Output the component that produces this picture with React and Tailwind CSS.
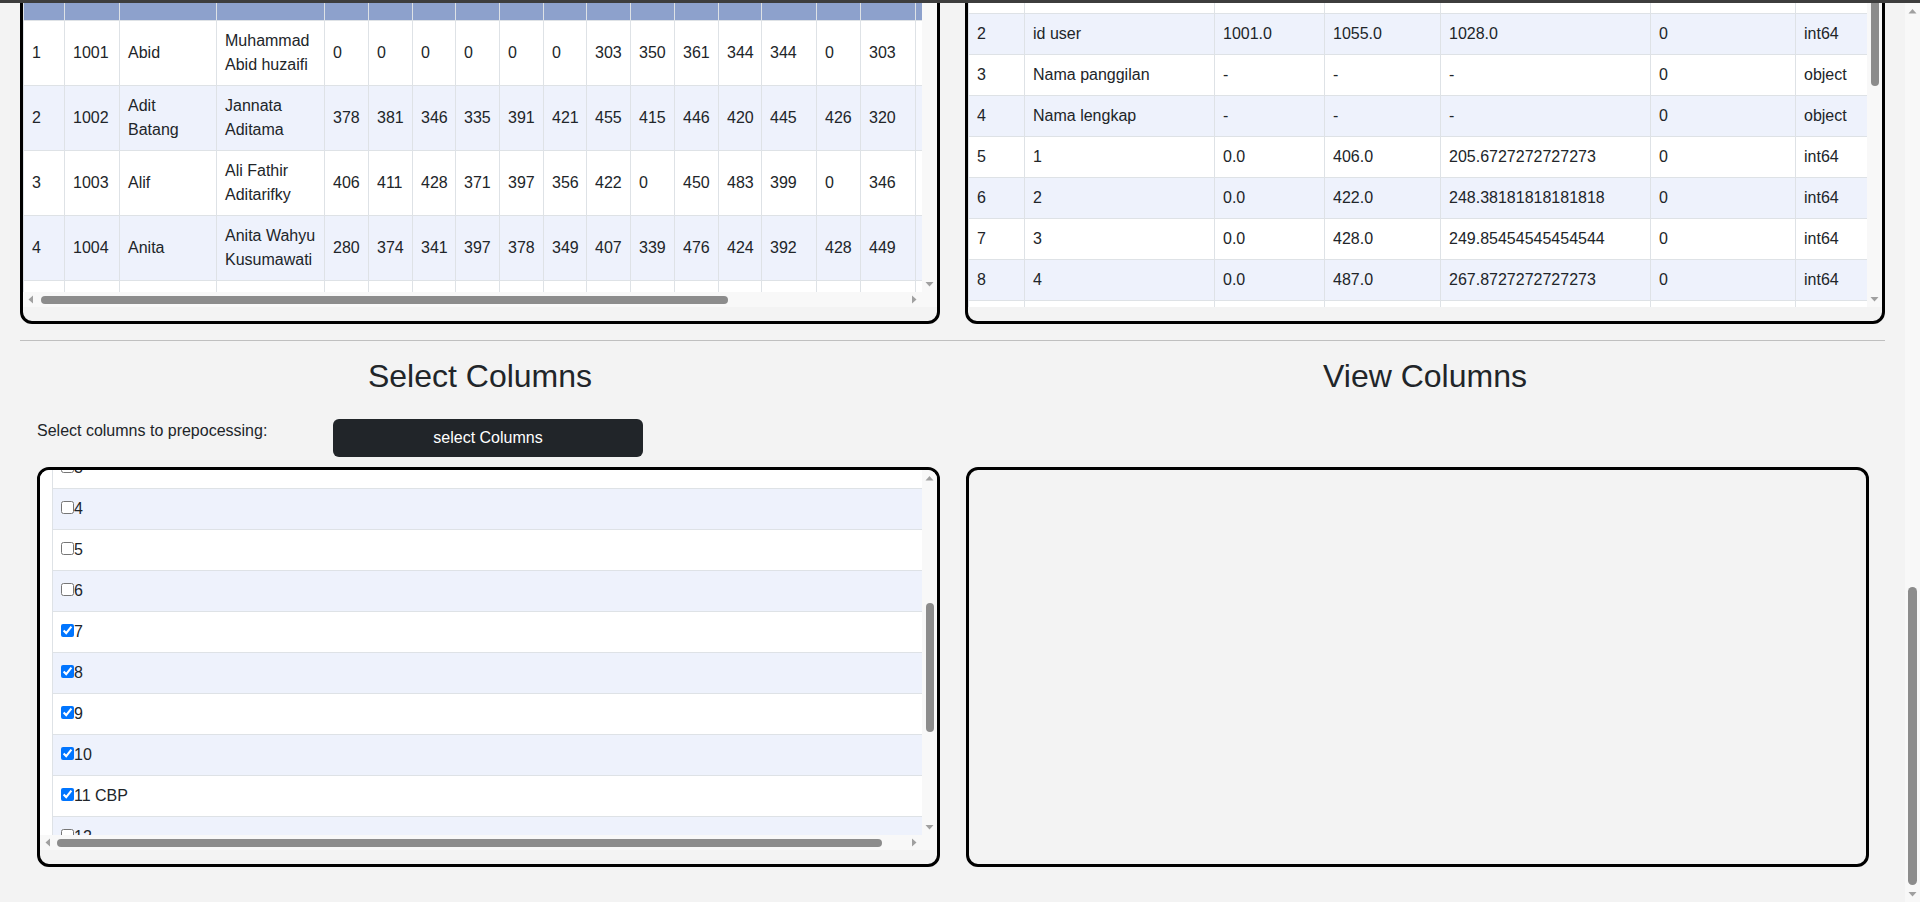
import React, { useLayoutEffect, useRef } from 'react';

const COLUMNS = ['No', 'id user', 'Nama panggilan', 'Nama lengkap', '1', '2', '3', '4', '5', '6', '7', '8', '9', '10', '11 CBP', '12', '13 CBP', '14', '15', '16', '17', '18'];
const DATA_WIDTHS = ['w-[41px]', 'w-[55px]', 'w-[97px]', 'w-[108px]', 'w-[44px]', 'w-[44px]', 'w-[43px]', 'w-[44px]', 'w-[44px]', 'w-[43px]', 'w-[44px]', 'w-[44px]', 'w-[44px]', 'w-[43px]', 'w-[55px]', 'w-[44px]', 'w-[55px]', 'w-[44px]', 'w-[44px]', 'w-[44px]', 'w-[55px]', 'w-[59px]'];
const STAT_WIDTHS = ['w-[56px]', 'w-[190px]', 'w-[110px]', 'w-[116px]', 'w-[210px]', 'w-[145px]', 'w-[72px]'];
const CHECKED = ['7', '8', '9', '10', '11 CBP'];

const FIRST_ROWS = [
    ['1', '1001', 'Abid', 'Muhammad Abid huzaifi', 0, 0, 0, 0, 0, 0, 303, 350, 361, 344, 344, 0, 303],
    ['2', '1002', 'Adit Batang', 'Jannata Aditama', 378, 381, 346, 335, 391, 421, 455, 415, 446, 420, 445, 426, 320],
    ['3', '1003', 'Alif', 'Ali Fathir Aditarifky', 406, 411, 428, 371, 397, 356, 422, 0, 450, 483, 399, 0, 346],
    ['4', '1004', 'Anita', 'Anita Wahyu Kusumawati', 280, 374, 341, 397, 378, 349, 407, 339, 476, 424, 392, 428, 449],
];
const NICKS = ['Aqila', 'Arga', 'Aurel', 'Bagas', 'Bima', 'Cinta', 'Daffa', 'Dewi', 'Dimas', 'Fajar', 'Farah', 'Gilang', 'Hana', 'Ilham', 'Intan', 'Kevin', 'Laras'];
const LAST = ['Pratama', 'Saputra', 'Lestari', 'Ramadhani', 'Putri', 'Nugroho'];

const score = (i, j) => ((i + j) % 11 === 0 ? 0 : ((i * 37 + j * 53) % 190) + 290);

const students = [
    ...FIRST_ROWS.map((r) => [...r, 402, 377, 415, 388, 430]),
    ...Array.from({ length: 51 }, (_, k) => {
        const i = k + 5;
        const nick = NICKS[k % NICKS.length];
        return [String(i), String(1000 + i), nick, `${nick} ${LAST[k % LAST.length]}`, ...Array.from({ length: 18 }, (_, j) => score(i, j))];
    }),
];

const stats = [
    ['1', 'No', '1.0', '55.0', '28.0', '0', 'int64'],
    ['2', 'id user', '1001.0', '1055.0', '1028.0', '0', 'int64'],
    ['3', 'Nama panggilan', '-', '-', '-', '0', 'object'],
    ['4', 'Nama lengkap', '-', '-', '-', '0', 'object'],
    ['5', '1', '0.0', '406.0', '205.6727272727273', '0', 'int64'],
    ['6', '2', '0.0', '422.0', '248.38181818181818', '0', 'int64'],
    ['7', '3', '0.0', '428.0', '249.85454545454544', '0', 'int64'],
    ['8', '4', '0.0', '487.0', '267.8727272727273', '0', 'int64'],
    ...COLUMNS.slice(8).map((c, k) => [String(k + 9), c, '0.0', `${441 + ((k * 13) % 50)}.0`, `${262 + ((k * 7) % 40)}.4181818181818`, '0', 'int64']),
];

const cell = 'border border-[#dee2e6] px-2 py-2 align-middle';

const ARROWS = {
    up: '3.5,10.5 11.5,10.5 7.5,6',
    down: '3.5,5 11.5,5 7.5,9.5',
    left: '10,3.5 10,11.5 5.5,7.5',
    right: '5,3.5 5,11.5 9.5,7.5',
};

const Arrow = ({ dir }) => (
    <svg width="15" height="15" viewBox="0 0 15 15" className="shrink-0 block">
        <polygon points={ARROWS[dir]} fill="#a0a0a0" />
    </svg>
);

const VBar = ({ thumb }) => (
    <div className="w-[15px] shrink-0 flex flex-col bg-[#f8f8f8]">
        <Arrow dir="up" />
        <div className="flex-1 overflow-hidden">
            <div className={`mx-auto w-[8px] rounded-full bg-[#8c8c8c] ${thumb}`} />
        </div>
        <Arrow dir="down" />
    </div>
);

const HBar = ({ thumb }) => (
    <div className="h-[15px] flex-1 flex bg-[#f8f8f8]">
        <Arrow dir="left" />
        <div className="flex-1 flex items-center overflow-hidden">
            <div className={`h-[8px] rounded-full bg-[#8c8c8c] ${thumb}`} />
        </div>
        <Arrow dir="right" />
    </div>
);

const App = () => {
    const pageRef = useRef(null);
    const topRef = useRef(null);
    const listRef = useRef(null);

    useLayoutEffect(() => {
        const page = pageRef.current;
        const offset = topRef.current.getBoundingClientRect().top - page.getBoundingClientRect().top;
        page.scrollTop = page.scrollTop + offset + 75;
        listRef.current.scrollTop = 334;
    }, []);

    return (
        <div className="h-screen flex flex-col font-['Liberation_Sans',Arial,sans-serif] text-[16px] leading-6 text-[#212529]">
            <div className="h-[3px] shrink-0 bg-[#3d3d3d]" />
            <div className="h-[899px] flex">
                <div ref={pageRef} className="flex-1 overflow-hidden bg-[#f3f3f3]">
                    <div className="px-[20px] pb-[44px]">
                        {/* Upload */}
                        <div className="h-[1657px] pt-6">
                            <h1 className="text-[40px] leading-[1.2] text-center">Preprocessing Data</h1>
                            <div className="mt-8 flex items-center gap-4">
                                <span>Upload dataset (.csv / .xlsx):</span>
                                <button className="px-4 h-[38px] bg-[#212529] text-white rounded-[6px]">Upload</button>
                            </div>
                        </div>

                        {/* Dataset + describe */}
                        <div ref={topRef} className="grid grid-cols-2 gap-x-[25px]">
                            <div className="border-[3px] border-black rounded-[12px] overflow-hidden pb-[14px]">
                                <div className="h-[361px] flex">
                                    <div className="flex-1 overflow-hidden">
                                        <table className="table-fixed border-collapse w-[1138px] text-left">
                                            <colgroup>
                                                {DATA_WIDTHS.map((w, i) => <col key={i} className={w} />)}
                                            </colgroup>
                                            <thead>
                                                <tr className="h-[89px] bg-[#8da1cc]">
                                                    {COLUMNS.map((c) => <th key={c} className={`${cell} font-bold`}>{c}</th>)}
                                                </tr>
                                            </thead>
                                            <tbody>
                                                {students.map((row) => (
                                                    <tr key={row[0]} className="even:bg-[#eef2fc] bg-white">
                                                        {row.map((v, j) => <td key={j} className={cell}>{v}</td>)}
                                                    </tr>
                                                ))}
                                            </tbody>
                                        </table>
                                    </div>
                                    <VBar thumb="h-[34px]" />
                                </div>
                                <div className="flex">
                                    <HBar thumb="ml-[3px] w-[687px]" />
                                    <div className="w-[15px] h-[15px] bg-[#f8f8f8]" />
                                </div>
                            </div>
                            <div className="border-[3px] border-black rounded-[12px] overflow-hidden pb-[14px]">
                                <div className="h-[376px] flex">
                                    <div className="flex-1 overflow-hidden">
                                        <table className="table-fixed border-collapse w-full text-left">
                                            <colgroup>
                                                {STAT_WIDTHS.map((w, i) => <col key={i} className={w} />)}
                                            </colgroup>
                                            <thead>
                                                <tr className="bg-[#8da1cc]">
                                                    {['#', 'Column', 'Min', 'Max', 'Mean', 'Missing', 'Dtype'].map((h) => (
                                                        <th key={h} className={`${cell} font-bold`}>{h}</th>
                                                    ))}
                                                </tr>
                                            </thead>
                                            <tbody>
                                                {stats.map((row) => (
                                                    <tr key={row[0]} className="even:bg-[#eef2fc] bg-white">
                                                        {row.map((v, j) => <td key={j} className={cell}>{v}</td>)}
                                                    </tr>
                                                ))}
                                            </tbody>
                                        </table>
                                    </div>
                                    <VBar thumb="h-[140px]" />
                                </div>
                            </div>
                        </div>

                        <hr className="mt-4 mb-4 border-t border-[#bfbfbf]" />

                        {/* Select / view columns */}
                        <div className="grid grid-cols-2 gap-x-[25px]">
                            <h2 className="text-[32px] leading-[1.2] text-center mb-6">Select Columns</h2>
                            <h2 className="text-[32px] leading-[1.2] text-center mb-6">View Columns</h2>

                            <div className="flex items-start pl-[17px]">
                                <label className="w-[296px]">Select columns to prepocessing:</label>
                                <button className="w-[310px] h-[38px] bg-[#212529] text-white rounded-[6px]">select Columns</button>
                            </div>
                            <div />

                            <div className="mt-[10px] ml-[17px] h-[400px] border-[3px] border-black rounded-[12px] overflow-hidden pb-[14px]">
                                <div className="h-[365px] flex">
                                    <div ref={listRef} className="flex-1 overflow-hidden bg-white">
                                        <table className="ml-[12px] w-[901px] border-collapse text-left">
                                            <thead>
                                                <tr className="h-[65px]">
                                                    <th className={`${cell} font-bold`}>Kolom</th>
                                                </tr>
                                            </thead>
                                            <tbody>
                                                {COLUMNS.map((c) => (
                                                    <tr key={c} className="even:bg-[#eef2fc] bg-white">
                                                        <td className={cell}>
                                                            <label>
                                                                <input type="checkbox" defaultChecked={CHECKED.includes(c)} />
                                                                {c}
                                                            </label>
                                                        </td>
                                                    </tr>
                                                ))}
                                            </tbody>
                                        </table>
                                    </div>
                                    <VBar thumb="mt-[118px] h-[129px]" />
                                </div>
                                <div className="flex">
                                    <HBar thumb="ml-[2px] w-[825px]" />
                                    <div className="w-[15px] h-[15px] bg-[#f8f8f8]" />
                                </div>
                            </div>
                            <div className="mt-[10px] ml-px mr-[16px] h-[400px] border-[3px] border-black rounded-[12px]" />
                        </div>
                    </div>
                </div>

                {/* page scrollbar */}
                <div className="w-[15px] shrink-0 flex flex-col bg-[#f8f8f8]">
                    <Arrow dir="up" />
                    <div className="flex-1 overflow-hidden">
                        <div className="mx-auto mt-[569px] w-[9px] h-[298px] rounded-full bg-[#8c8c8c]" />
                    </div>
                    <Arrow dir="down" />
                </div>
            </div>
        </div>
    );
};

export default App;
